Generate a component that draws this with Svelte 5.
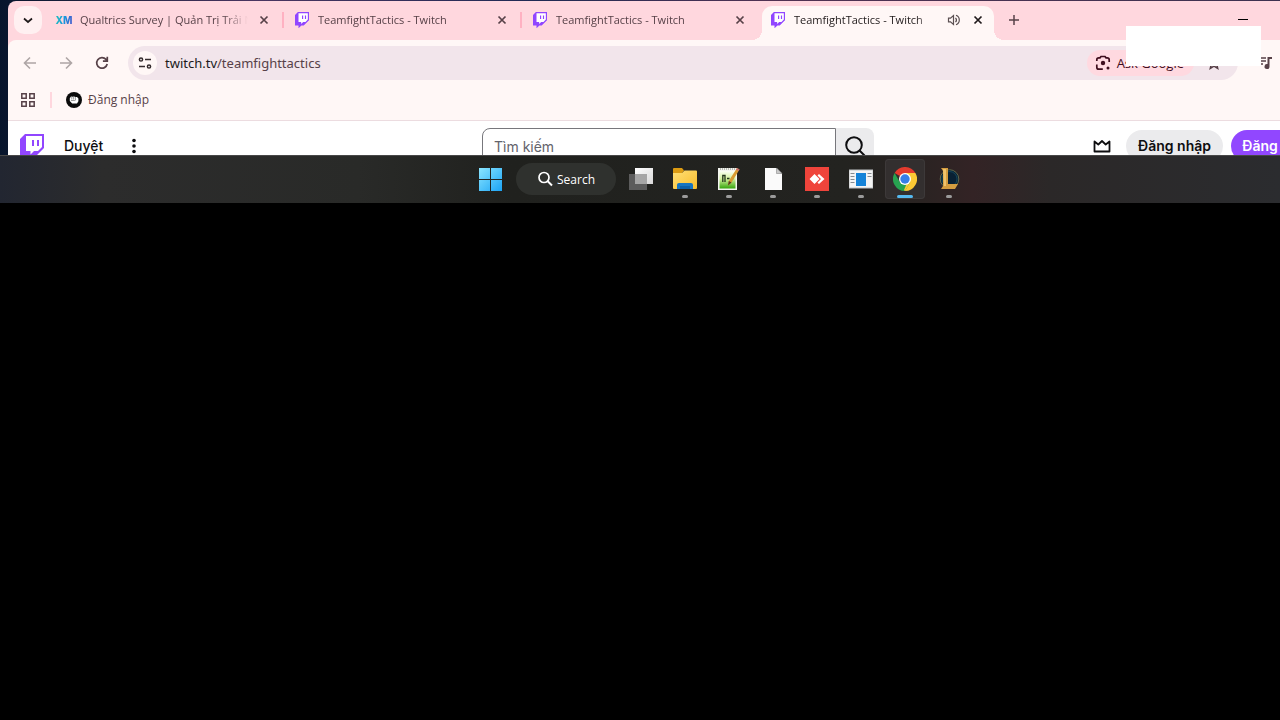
<script lang="ts">
  type Tab = { title: string; icon: 'xm' | 'twitch'; active?: boolean; playing?: boolean };

  const tabs: Tab[] = [
    { title: 'Qualtrics Survey | Quản Trị Trải Nghiệm', icon: 'xm' },
    { title: 'TeamfightTactics - Twitch', icon: 'twitch' },
    { title: 'TeamfightTactics - Twitch', icon: 'twitch' },
    { title: 'TeamfightTactics - Twitch', icon: 'twitch', active: true, playing: true },
  ];

  const apps = [
    { id: 'files', label: 'File Explorer' },
    { id: 'notes', label: 'Notepad++' },
    { id: 'document', label: 'Document' },
    { id: 'anydesk', label: 'AnyDesk' },
    { id: 'viewer', label: 'Viewer' },
    { id: 'chrome', label: 'Google Chrome' },
    { id: 'league', label: 'League of Legends' },
  ];

  let query = $state('');
</script>

{#snippet twitchLogo(size: number)}
  <svg width={size} height={(size * 7) / 6} viewBox="0 0 24 28" aria-hidden="true">
    <path d="M5 0 0 5v18h6v5l5-5h4l9-9V0z" fill="#9146ff" />
    <path d="M6 2h16v11l-4 4h-4l-3.500 3.500V17H6z" fill="#fff" />
    <path d="M12 6h2v6h-2zM17 6h2v6h-2z" fill="#9146ff" />
  </svg>
{/snippet}

{#snippet closeIcon()}
  <svg width="16" height="16" viewBox="0 0 16 16" aria-hidden="true">
    <path d="m4.500 4.500 7 7m0-7-7 7" stroke="currentColor" stroke-width="1.700" />
  </svg>
{/snippet}

<main class="desktop">
  <div class="window">
    <header class="strip">
      <button class="tab-search" type="button" aria-label="Search tabs">
        <svg width="12" height="12" viewBox="0 0 12 12"><path d="m2 4.500 4 3.500 4-3.500" fill="none" stroke="currentColor" stroke-width="1.700" /></svg>
      </button>
      {#each tabs as tab, i}
        <div class="tab" class:active={tab.active} class:divided={i < 2}>
          <span class="favicon">
            {#if tab.icon === 'xm'}
              <span class="xm">XM</span>
            {:else}
              {@render twitchLogo(14)}
            {/if}
          </span>
          <span class="title">{tab.title}</span>
          {#if tab.playing}
            <button class="mini" type="button" aria-label="Mute tab">
              <svg width="14" height="14" viewBox="0 0 14 14" fill="none" stroke="#5b5052" stroke-width="1.200">
                <path d="M1.500 5.200v3.600h2l3 2.600V2.600l-3 2.600zM8.500 4.800q2 2.200 0 4.400M9 2.300a5 5 0 0 1 0 9.400" />
              </svg>
            </button>
          {/if}
          <button class="mini" type="button" aria-label="Close tab">{@render closeIcon()}</button>
        </div>
      {/each}
      <button class="new-tab" type="button" aria-label="New tab">
        <svg width="14" height="14" viewBox="0 0 14 14"><path d="M7 2v10M2 7h10" stroke="currentColor" stroke-width="1.500" /></svg>
      </button>
      <div class="controls">
        <button type="button" aria-label="Minimize">
          <svg width="10" height="10" viewBox="0 0 10 10"><path d="M0 4.500h10" stroke="#000" /></svg>
        </button>
        <button type="button" aria-label="Maximize">
          <svg width="10" height="10" viewBox="0 0 10 10"><path d="M.5.5h9v9h-9z" fill="none" stroke="#000" /></svg>
        </button>
        <button type="button" aria-label="Close">
          <svg width="10" height="10" viewBox="0 0 10 10"><path d="m0 0 10 10M10 0 0 10" stroke="#000" /></svg>
        </button>
      </div>
    </header>

    <nav class="toolbar" aria-label="Navigation">
      <button class="tool dim" type="button" aria-label="Back">
        <svg width="16" height="16" viewBox="0 0 16 16" fill="none" stroke="currentColor" stroke-width="1.600"><path d="M14 8H3M8 2.500 2.500 8 8 13.500" /></svg>
      </button>
      <button class="tool dim" type="button" aria-label="Forward">
        <svg width="16" height="16" viewBox="0 0 16 16" fill="none" stroke="currentColor" stroke-width="1.600"><path d="M2 8h11M8 2.500 13.500 8 8 13.500" /></svg>
      </button>
      <button class="tool" type="button" aria-label="Reload">
        <svg width="16" height="16" viewBox="0 0 16 16" fill="none" stroke="currentColor" stroke-width="1.700"><path d="M13.200 9A5.300 5.300 0 1 1 12 4.400l1 1.100M13.300 1.800v4.400H8.900" /></svg>
      </button>
      <div class="omnibox">
        <button class="site" type="button" aria-label="Site information">
          <svg width="14" height="14" viewBox="0 0 14 14" fill="none" stroke="currentColor" stroke-width="1.500">
            <circle cx="3" cy="3.500" r="1.600" /><circle cx="11" cy="10.500" r="1.600" /><path d="M7 3.500h6M1 10.500h6" />
          </svg>
        </button>
        <span class="url"><b>twitch.tv</b>/teamfighttactics</span>
        <button class="ask" type="button">
          <svg width="16" height="16" viewBox="0 0 16 16" fill="none" stroke="currentColor" stroke-width="1.700">
            <path d="M1.800 6V4.800q0-2 2-2H5L6 1.500h4l1 1.300h1.200q2 0 2 2V7M1.800 9.500v2.700q0 2 2 2h4" />
            <circle cx="8" cy="8" r="2.200" fill="currentColor" stroke="none" /><circle cx="13" cy="13" r="1.500" fill="currentColor" stroke="none" />
          </svg>
          Ask Google
        </button>
        <button class="star" type="button" aria-label="Bookmark this tab">
          <svg width="16" height="16" viewBox="0 0 16 16" fill="none" stroke="currentColor" stroke-width="1.500"><path d="m8 2 1.700 4 4.300.4-3.300 2.800 1 4.300L8 11.200l-3.700 2.300 1-4.300L2 6.400 6.300 6z" /></svg>
        </button>
      </div>
      <div class="extras">
        <button class="tool" type="button" aria-label="Media controls">
          <svg width="16" height="16" viewBox="0 0 16 16"><path d="M1 3h7M1 6h7M1 9h4" stroke="currentColor" stroke-width="1.600" /><path d="M9.500 2H14v2h-2.500v7.500a2.500 2.500 0 1 1-2-2.400z" fill="currentColor" /></svg>
        </button>
        <button class="tool" type="button" aria-label="Profile">
          <svg width="16" height="16" viewBox="0 0 16 16"><circle cx="8" cy="8" r="7" fill="currentColor" /></svg>
        </button>
        <button class="tool" type="button" aria-label="Menu">
          <svg width="16" height="16" viewBox="0 0 16 16" fill="currentColor"><circle cx="8" cy="3" r="1.500" /><circle cx="8" cy="8" r="1.500" /><circle cx="8" cy="13" r="1.500" /></svg>
        </button>
      </div>
    </nav>

    <nav class="bookmarks" aria-label="Bookmarks">
      <button class="apps" type="button" aria-label="Apps">
        <svg width="14" height="14" viewBox="0 0 14 14" fill="none" stroke="currentColor" stroke-width="1.500">
          <path d="M.8.8h4.400v4.400H.8zM8.800.8h4.400v4.400H8.800zM.8 8.800h4.400v4.400H.8zM8.800 8.800h4.400v4.400H8.800z" />
        </svg>
      </button>
      <span class="rule"></span>
      <a class="bookmark" href="#login">
        <svg width="16" height="16" viewBox="0 0 16 16" aria-hidden="true">
          <circle cx="8" cy="8" r="8" fill="#0b0b0b" />
          <path d="M3.800 6.300 5 4.600l1.400.2L8 4.400l1.500.5 1.500.2 1.400 1.500v2.600L11 11.500H6.200L3.800 9z" fill="#fff" />
          <path d="M5.800 5v2.500M7.600 4.800v2.700M9.400 5v2.500M5 8.500h3.800l1.200-1" fill="none" stroke="#0b0b0b" stroke-width=".4" />
        </svg>
        Đăng nhập
      </a>
    </nav>

    <section class="site-header">
      <div class="brand">
        <a class="logo" href="#home" aria-label="Twitch">{@render twitchLogo(24)}</a>
        <a class="browse" href="#browse">Duyệt</a>
        <button class="more" type="button" aria-label="More">
          <svg width="20" height="20" viewBox="0 0 20 20" fill="currentColor"><circle cx="10" cy="4.500" r="1.800" /><circle cx="10" cy="10" r="1.800" /><circle cx="10" cy="15.500" r="1.800" /></svg>
        </button>
      </div>
      <form class="search" onsubmit={(e) => e.preventDefault()}>
        <input type="search" aria-label="Tìm kiếm" placeholder="Tìm kiếm" bind:value={query} />
        <button type="submit" aria-label="Tìm kiếm">
          <svg width="24" height="24" viewBox="0 0 24 24" fill="none" stroke="currentColor" stroke-width="2"><circle cx="11" cy="11" r="7.800" /><path d="m16.500 16.500 5 5" /></svg>
        </button>
      </form>
      <div class="actions">
        <button class="crown" type="button" aria-label="Prime">
          <svg width="20" height="20" viewBox="0 0 20 20" fill="none" stroke="currentColor" stroke-width="1.800" stroke-linejoin="round"><path d="M2.500 5.500 6.300 8.500 10 5l3.700 3.500 3.800-3V15.500h-15z" /></svg>
        </button>
        <button class="pill" type="button">Đăng nhập</button>
        <button class="pill primary" type="button">Đăng ký</button>
      </div>
    </section>
  </div>
  <div class="popup"></div>
</main>

<footer class="taskbar">
  <button class="task" type="button" aria-label="Start">
    <svg width="24" height="24" viewBox="0 0 24 24">
      <defs><linearGradient id="win" x1="0" y1="0" x2="1" y2="1"><stop stop-color="#8be6ff" /><stop offset="1" stop-color="#1ba3f5" /></linearGradient></defs>
      <path d="M1 1h11v11H1zM13 1h11v11H13zM1 13h11v11H1zM13 13h11v11H13z" fill="url(#win)" />
    </svg>
  </button>
  <button class="task-search" type="button">
    <svg width="16" height="16" viewBox="0 0 16 16" fill="none" stroke="currentColor" stroke-width="1.700"><circle cx="7" cy="6.500" r="5" /><path d="m10.500 10 4.500 4.500" stroke-width="2" /></svg>
    Search
  </button>
  <button class="task" type="button" aria-label="Task view">
    <svg width="24" height="24" viewBox="0 0 24 24">
      <defs><linearGradient id="pane" x1="0" y1="0" x2="1" y2="1"><stop stop-color="#fff" /><stop offset="1" stop-color="#d8d8d8" /></linearGradient></defs>
      <path d="M6 1h18v16H6z" fill="url(#pane)" />
      <path d="M0 7h18v16H0z" fill="#5c5c5c" />
      <path d="M6 7h12v10H6z" fill="#a6a6a6" />
    </svg>
  </button>
  {#each apps as app}
    <button class="task app" class:current={app.id === 'chrome'} type="button" aria-label={app.label}>
      <svg width="24" height="24" viewBox="0 0 24 24">
        {#if app.id === 'files'}
          <defs><linearGradient id="folder" x1="0" y1="0" x2="1" y2="1"><stop stop-color="#ffdf75" /><stop offset="1" stop-color="#f8bd2c" /></linearGradient></defs>
          <path d="M0 2q0-1 1-1h8l2 2.500L9 6H0z" fill="#dc9b12" />
          <path d="M0 6h9l2.500-2.500H23q1 0 1 1V21q0 1-1 1H1q-1 0-1-1z" fill="url(#folder)" />
          <path d="M4 22v-4q0-2 2-2h12q2 0 2 2v4z" fill="#1674c0" />
          <path d="M7 19h10v3H7z" fill="#0b5fa8" />
        {:else if app.id === 'notes'}
          <defs><linearGradient id="page" x1="0" y1="0" x2="0" y2="1"><stop stop-color="#fbfff6" /><stop offset=".45" stop-color="#d3f29d" /><stop offset="1" stop-color="#35a50b" /></linearGradient></defs>
          <path d="M1 1h19v22H1z" fill="#f4f5f0" />
          <path d="M2.500 4h16v17.500h-16z" fill="url(#page)" />
          <path d="M3 2h15" stroke="#7a8078" stroke-dasharray="1 1" />
          <path d="M5.800 15V8.500H8V15M10 11.500h2.500m1.500 0h2.500" fill="none" stroke="#23351b" stroke-width="1.300" />
          <path d="m20 1 2.500 1.500-8 13-3.500 3 .8-4.500z" fill="#d99b32" />
          <path d="m20 1 2.500 1.500-1 1.600-2.500-1.500z" fill="#c56a70" />
          <path d="m11.800 14 2.700 1.500-3.500 3z" fill="#553c20" />
        {:else if app.id === 'document'}
          <path d="M4 1h11.500L21 6.500V23H4z" fill="#fafafa" />
          <path d="M15.500 1v5.500H21z" fill="#c9c9c9" stroke="#888" stroke-width=".6" />
        {:else if app.id === 'anydesk'}
          <path d="M0 0h24v24H0z" fill="#ef443b" />
          <path d="m4.500 12 5-5 5 5-5 5zM12.500 8.500 14 7l5.500 5-5.500 5-1.500-1.500L16 12z" fill="#fff" />
        {:else if app.id === 'viewer'}
          <path d="M0 3h24v18H0z" fill="#f4f4f4" stroke="#bfc2c4" />
          <path d="M7 6h10v13H7z" fill="#1583d8" />
          <path d="M1.500 6.500h4m-4 3h4m-4 3h4m-4 3h4M18.500 6.500h4m-4 3h4" stroke="#858b91" stroke-width="1.200" />
        {:else if app.id === 'chrome'}
          <path d="M12 12 1.600 6A12 12 0 0 1 22.400 6z" fill="#e33b2e" />
          <path d="M12 12V6h10.400A12 12 0 0 1 12 24z" fill="#fcc934" />
          <path d="M12 12 12 24A12 12 0 0 1 1.600 6L6.800 15z" fill="#27a350" />
          <path d="M6.800 15 12 24l5.200-9z" fill="#27a350" />
          <path d="m17.200 15-5.200 9-1-1 3-7z" fill="#fcc934" />
          <circle cx="12" cy="12" r="6" fill="#fff" />
          <circle cx="12" cy="12" r="4.700" fill="#377fe8" />
        {:else}
          <circle cx="12.500" cy="12" r="9.300" fill="#0a2436" stroke="#6e7752" stroke-width=".8" />
          <circle cx="12.500" cy="12" r="7.500" fill="#092033" stroke="#174c62" stroke-width=".8" />
          <path d="M4 1h7v16h10l-3 5H4l2-3V4z" fill="#d49d40" />
          <path d="M6 2h3v17H7z" fill="#efc36b" />
        {/if}
      </svg>
    </button>
  {/each}
</footer>

<style>
  :global(body) {
    margin: 0;
    background: #000;
  }
  .desktop,
  .taskbar {
    --ink: #574148;
    font-family: 'Open Sans', 'Noto Sans', sans-serif;
    font-size: 12px;
    box-sizing: border-box;
  }
  button {
    display: flex;
    align-items: center;
    justify-content: center;
    flex: none;
    padding: 0;
    border: 0;
    background: none;
    color: inherit;
    font: inherit;
    white-space: nowrap;
    cursor: pointer;
  }
  a {
    color: inherit;
    text-decoration: none;
  }
  svg {
    display: block;
    flex: none;
  }

  .desktop {
    position: relative;
    height: 155px;
    padding: 1px 0 0 8px;
    overflow: hidden;
    background: linear-gradient(90deg, #07152c, #4b3561 20%, #202954 42%, #513253 60%, #3e3150);
  }
  /* the browser runs past the right edge of the screen */
  .window {
    margin-right: -78px;
    overflow: hidden;
    border-radius: 8px 0 0 0;
    background: #ffd7de;
    color: var(--ink);
  }
  .strip {
    display: flex;
    gap: 6px;
    height: 34px;
    padding: 5px 0 0 6px;
  }
  .tab-search,
  .new-tab {
    width: 28px;
    height: 28px;
    border-radius: 10px;
  }
  .tab-search {
    background: #fff0f1;
    color: #201a1b;
  }
  .tab {
    position: relative;
    display: flex;
    flex: none;
    align-items: center;
    gap: 8px;
    box-sizing: border-box;
    width: 232px;
    padding: 0 8px 6px;
    border-radius: 10px 10px 0 0;
  }
  .tab.divided::after {
    content: '';
    position: absolute;
    top: 6px;
    right: -4px;
    width: 2px;
    height: 16px;
    background: #ffb1c2;
  }
  .tab.active {
    background: #fff7f6;
    color: #201a1b;
  }
  .tab.active::before,
  .tab.active::after {
    content: '';
    position: absolute;
    bottom: 0;
    width: 10px;
    height: 10px;
  }
  .tab.active::before {
    left: -10px;
    background: radial-gradient(circle at 0 0, transparent 10px, #fff7f6 10px);
  }
  .tab.active::after {
    right: -10px;
    background: radial-gradient(circle at 100% 0, transparent 10px, #fff7f6 10px);
  }
  .favicon {
    display: flex;
    align-items: center;
    justify-content: center;
    flex: none;
    width: 16px;
  }
  .xm {
    background: linear-gradient(100deg, #24c6b5, #1697de 50%, #4b4cc9);
    background-clip: text;
    color: transparent;
    font: 800 10px/16px Inter, sans-serif;
  }
  .title {
    flex: 1;
    min-width: 0;
    overflow: hidden;
    font-size: 11px;
    line-height: 18px;
    white-space: nowrap;
    mask-image: linear-gradient(90deg, #000 85%, transparent);
  }
  .mini {
    width: 16px;
    height: 16px;
  }
  .controls {
    display: flex;
    margin-left: auto;
  }
  .controls button {
    width: 46px;
    height: 28px;
  }

  .toolbar {
    display: flex;
    align-items: center;
    gap: 4px;
    padding: 6px 4px 6px 6px;
    border-radius: 8px 0 0 0;
    background: #fff7f6;
  }
  .tool {
    width: 32px;
    height: 32px;
  }
  .tool.dim {
    color: #aea5a5;
  }
  .omnibox {
    display: flex;
    align-items: center;
    flex: 1;
    height: 34px;
    margin: 0 8px 0 6px;
    padding: 0 16px 0 5px;
    border-radius: 17px;
    background: #f2e5eb;
  }
  .site {
    width: 24px;
    height: 24px;
    border-radius: 50%;
    background: #fff7f6;
    color: #342b2d;
  }
  .url {
    flex: 1;
    margin-left: 8px;
    font-family: 'Noto Sans', sans-serif;
    font-size: 13px;
    line-height: 20px;
  }
  .url b {
    color: #201a1b;
    font-weight: 400;
  }
  .ask {
    gap: 6px;
    height: 26px;
    padding: 0 10px 0 8px;
    border-radius: 13px;
    background: #ffd9e0;
    color: #3f0d1d;
    font-size: 13px;
  }
  .star {
    margin-left: 12px;
  }
  .extras {
    display: flex;
    gap: 4px;
  }

  .bookmarks {
    display: flex;
    align-items: center;
    height: 28px;
    padding: 0 13px 6px;
    border-bottom: 1px solid #ecdce0;
    background: #fff7f6;
  }
  .rule {
    width: 2px;
    height: 16px;
    margin: 0 14px 0 15px;
    background: #ffd7de;
  }
  .bookmark {
    display: flex;
    align-items: center;
    gap: 6px;
    line-height: 16px;
  }

  .site-header {
    display: grid;
    grid-template-columns: 1fr 392px 1fr;
    align-items: center;
    height: 50px;
    padding: 0 22px 0 12px;
    background: #fff;
    color: #0e0e10;
    font: 14px/20px Inter, sans-serif;
  }
  .brand,
  .actions {
    display: flex;
    align-items: center;
  }
  .browse {
    margin: 0 21px 0 20px;
    font-weight: 500;
  }
  .logo {
    height: 24px;
  }
  .search {
    display: flex;
    height: 36px;
  }
  .search input {
    flex: 1;
    min-width: 0;
    box-sizing: border-box;
    padding: 2px 11px 0;
    border: 1px solid #77777c;
    border-radius: 8px 0 0 8px;
    background: #fff;
    color: #0e0e10;
    font: inherit;
  }
  .search input::placeholder {
    color: #63636b;
    opacity: 1;
  }
  .search button {
    width: 38px;
    border-radius: 0 8px 8px 0;
    background: #ebebed;
  }
  .actions {
    justify-content: flex-end;
    gap: 8px;
    padding-right: 27px;
  }
  .crown {
    margin-right: 6px;
  }
  .pill {
    height: 32px;
    padding: 0 12px;
    border-radius: 16px;
    background: #ebebed;
    font-weight: 600;
  }
  .primary {
    width: 78px;
    background: #9147ff;
    color: #fff;
  }

  .popup {
    position: absolute;
    top: 26px;
    right: 19px;
    width: 135px;
    height: 40px;
    background: #fff;
  }

  .taskbar {
    display: flex;
    align-items: center;
    justify-content: center;
    gap: 4px;
    height: 48px;
    padding-left: 159px;
    background: linear-gradient(90deg, #222631, #2c2c2c 8%, #292a28 28%, #20211e 40%, #232320 66%, #2a2322 72%, #332325 76%, #2b2828 82%, #2b2c2f);
    box-shadow: inset 0 1px #484848;
    color: #fff;
  }
  .task {
    position: relative;
    box-sizing: border-box;
    width: 40px;
    height: 40px;
    border-radius: 4px;
  }
  .task.app::after {
    content: '';
    position: absolute;
    bottom: 1px;
    left: 17px;
    width: 6px;
    height: 3px;
    border-radius: 2px;
    background: #9b9b9b;
  }
  .task.current {
    background: #332f2f;
    box-shadow: inset 0 0 0 1px #3d3939;
  }
  .task.current::after {
    left: 12px;
    width: 16px;
    background: #55b9f0;
  }
  .task-search {
    gap: 4px;
    width: 100px;
    height: 32px;
    margin: 0 1px 0 2px;
    border-radius: 16px;
    background: #2f312e;
  }
</style>
